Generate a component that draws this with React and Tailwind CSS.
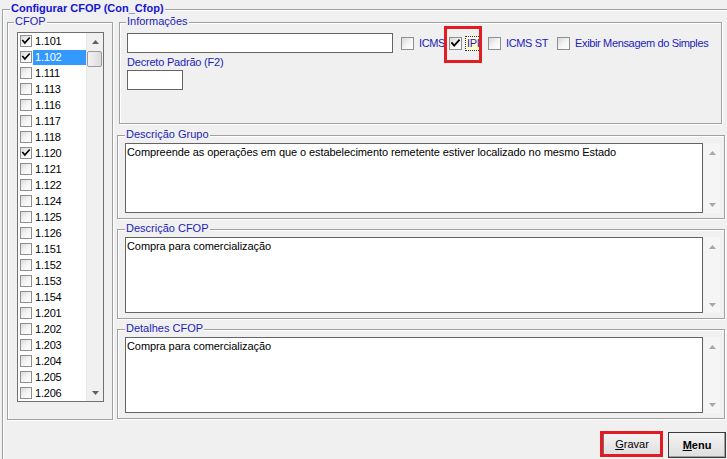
import React from "react";

const items = [
  ["1.101", true], ["1.102", true], ["1.111", false], ["1.113", false], ["1.116", false],
  ["1.117", false], ["1.118", false], ["1.120", true], ["1.121", false], ["1.122", false],
  ["1.124", false], ["1.125", false], ["1.126", false], ["1.151", false], ["1.152", false],
  ["1.153", false], ["1.154", false], ["1.201", false], ["1.202", false], ["1.203", false],
  ["1.204", false], ["1.205", false], ["1.206", false],
];

function CheckMark() {
  return (
    <svg viewBox="0 0 12 12" className="w-full h-full">
      <path d="M2.2 5.6 L4.6 8.4 L9.8 2.6" stroke="#000" strokeWidth="2" fill="none" strokeLinecap="square" />
    </svg>
  );
}

function Box({ checked, big }) {
  return (
    <span
      className={
        (big ? "w-[13px] h-[13px] " : "w-[12px] h-[12px] ") +
        "flex shrink-0 border border-[#8e8f8f] bg-linear-to-br from-[#d8d8d8] via-[#f4f4f4] to-white"
      }
    >
      {checked ? <CheckMark /> : null}
    </span>
  );
}

function Tri({ down, color }) {
  return (
    <svg width="7" height="4" viewBox="0 0 7 4">
      {down ? (
        <path d="M0 0 H7 L3.5 4 Z" fill={color} />
      ) : (
        <path d="M0 4 H7 L3.5 0 Z" fill={color} />
      )}
    </svg>
  );
}

function Title({ children, left }) {
  return (
    <span
      className={
        "absolute -top-[8px] bg-[#f0f0f0] px-[1px] leading-[13px] text-[#1c1cb8] whitespace-nowrap " + left
      }
    >
      {children}
    </span>
  );
}

const groupCls =
  "relative border border-[#a0a0a0] shadow-[inset_1px_1px_0_#ffffff,1px_1px_0_#ffffff]";

function Memo({ title, text, groupH, boxH, mt, pt }) {
  return (
    <div className={groupCls + " w-[608px] pl-[7px] " + groupH + " " + mt + " " + pt}>
      <Title left="left-[7px]">{title}</Title>
      <div className="flex">
        <div
          className={
            "w-[578px] bg-white border border-[#646464] px-[1px] pt-[2px] leading-[13px] tracking-[-0.08px] text-black " +
            boxH
          }
        >
          {text}
        </div>
        <div className={"w-[16px] ml-[1px] flex flex-col items-center justify-between pt-[8px] pb-[6px] bg-[#f5f5f5] " + boxH}>
          <Tri color="#a8a8a8" />
          <Tri down color="#a8a8a8" />
        </div>
      </div>
    </div>
  );
}

export default function App() {
  return (
    <div
      className="w-[727px] h-[459px] overflow-hidden bg-[#f0f0f0] pt-[9px] pl-[2px] text-[11px]"
      style={{ fontFamily: '"Liberation Sans", Arial, sans-serif' }}
    >
      <div className={groupCls + " w-[740px] h-[470px] pl-[4px] pt-[12px]"}>
        <span className="absolute -top-[8px] left-[7px] bg-[#f0f0f0] px-[1px] leading-[13px] font-bold text-[#1414d4] whitespace-nowrap">
          Configurar CFOP (Con_Cfop)
        </span>

        <div className="flex gap-[4px]">
          {/* CFOP list group */}
          <div className={groupCls + " w-[106px] h-[398px] pl-[9px] pt-[9px]"}>
            <Title left="left-[6px]">CFOP</Title>
            <div className="flex w-[87px] h-[370px] border border-[#707070] bg-white">
              <div className="w-[68px] flex flex-col">
                {items.map(([label, checked], i) => (
                  <div key={label} className="flex items-center h-[16px] pl-[2px] shrink-0">
                    <Box checked={checked} />
                    <span
                      className={
                        "ml-[1px] flex-1 h-[15px] flex items-center pl-[2px] leading-[13px] tracking-[-0.2px] " +
                        (i === 1 ? "bg-[#3399ff] text-white" : "text-black")
                      }
                    >
                      {label}
                    </span>
                  </div>
                ))}
              </div>
              <div className="w-[17px] flex flex-col bg-[#f0f0f0] border-l border-[#e8e8e8]">
                <div className="h-[17px] flex items-center justify-center">
                  <Tri color="#606060" />
                </div>
                <div className="mt-[1px] w-[15px] h-[16px] rounded-[2px] border border-[#9a9a9a] bg-linear-to-r from-[#f2f2f2] to-[#dcdcdc]" />
                <div className="flex-1" />
                <div className="h-[17px] flex items-center justify-center">
                  <Tri down color="#606060" />
                </div>
              </div>
            </div>
          </div>

          {/* right column */}
          <div className="flex flex-col">
            <div className={groupCls + " ml-[2px] w-[603px] h-[102px] pl-[7px] pt-[10px]"}>
              <Title left="left-[6px]">Informações</Title>
              <div className="flex items-center h-[20px] tracking-[-0.35px]">
                <div className="w-[266px] h-[20px] bg-white border border-[#646464]" />
                <div className="ml-[8px] w-[48px] flex items-center">
                  <Box big />
                  <span className="ml-[5px] text-[#1c1cb8] leading-[13px]">ICMS</span>
                </div>
                <div className="w-[39px] flex items-center">
                  <Box big checked />
                  <span className="ml-[4px] px-[1px] outline outline-1 outline-dotted outline-[#333] bg-[#fffbd0] text-[#1c1cb8] leading-[13px]">
                    IPI
                  </span>
                </div>
                <div className="w-[69px] flex items-center">
                  <Box big />
                  <span className="ml-[5px] text-[#1c1cb8] leading-[13px] whitespace-nowrap">ICMS ST</span>
                </div>
                <div className="flex items-center">
                  <Box big />
                  <span className="ml-[5px] text-[#1c1cb8] leading-[13px] whitespace-nowrap">
                    Exibir Mensagem do Simples
                  </span>
                </div>
              </div>
              <div className="mt-[3px] leading-[13px] tracking-[-0.2px] text-[#1c1cb8]">Decreto Padrão (F2)</div>
              <div className="mt-[1px] w-[56px] h-[20px] bg-white border border-[#646464]" />
              <div className="absolute left-[324px] top-[3px] w-[38px] h-[37px] border-[3px] border-[#e31b23]" />
            </div>

            <Memo
              title="Descrição Grupo"
              text="Compreende as operações em que o estabelecimento remetente estiver localizado no mesmo Estado"
              groupH="h-[84px]"
              boxH="h-[70px]"
              mt="mt-[11px]"
              pt="pt-[7px]"
            />
            <Memo
              title="Descrição CFOP"
              text="Compra para comercialização"
              groupH="h-[90px]"
              boxH="h-[76px]"
              mt="mt-[10px]"
              pt="pt-[7px]"
            />
            <Memo
              title="Detalhes CFOP"
              text="Compra para comercialização"
              groupH="h-[90px]"
              boxH="h-[76px]"
              mt="mt-[10px]"
              pt="pt-[7px]"
            />
          </div>
        </div>

        <div className="w-[719px] mt-[12px] flex justify-end gap-[7px]">
          <div className="relative w-[58px] h-[25px] border border-[#707070] bg-linear-to-b from-[#f4f4f4] to-[#dedede] flex items-center justify-center text-black">
            <span>
              <span className="underline">G</span>ravar
            </span>
            <div className="absolute -left-[4px] -right-[3px] -top-[2px] -bottom-[1px] border-[3px] border-[#e31b23]" />
          </div>
          <div className="w-[58px] h-[26px] border border-[#3c3c3c] shadow-[inset_-1px_-1px_0_#a0a0a0] bg-linear-to-b from-[#f4f4f4] to-[#dedede] flex items-center justify-center font-bold text-black">
            <span>
              <span className="underline">M</span>enu
            </span>
          </div>
        </div>
      </div>
    </div>
  );
}
